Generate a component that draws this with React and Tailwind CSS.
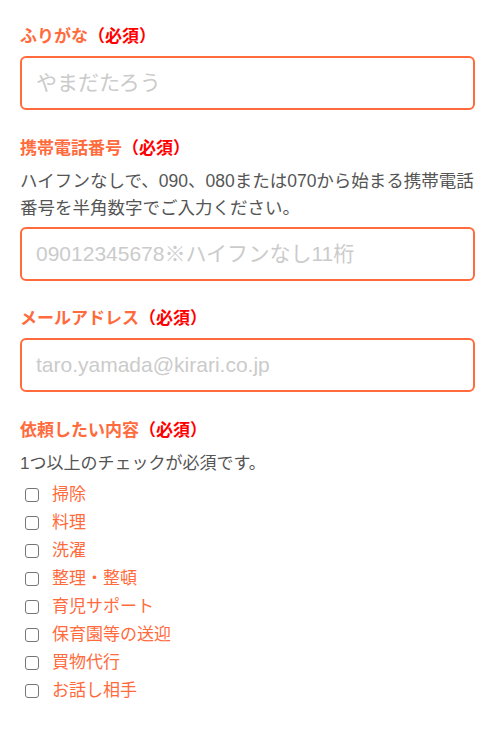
export default function App() {
  const items = ['掃除', '料理', '洗濯', '整理・整頓', '育児サポート', '保育園等の送迎', '買物代行', 'お話し相手'];
  const font = { fontFamily: '"Liberation Sans", "Noto Sans CJK JP", sans-serif' };

  const Label = ({ children }) => (
    <p className="mb-[6px] text-[17px] font-bold leading-[27px] text-[#ff6b3d]">
      {children}
      <span className="text-[#ff0000]">（必須）</span>
    </p>
  );

  const Field = ({ placeholder }) => (
    <input
      type="text"
      placeholder={placeholder}
      className="block h-[54px] w-full rounded-[6px] border-2 border-[#ff6b3d] px-[14px] text-[21px] outline-none placeholder:text-[#cbcbcb]"
    />
  );

  return (
    <div className="min-h-screen bg-white pl-5 pr-[18px] pt-[23px]" style={font}>
      <div className="mb-[25px]">
        <Label>ふりがな</Label>
        <Field placeholder="やまだたろう" />
      </div>

      <div className="mb-[24px]">
        <Label>携帯電話番号</Label>
        <p className="mb-[5px] text-[17.5px] leading-[27px] text-[#555]">
          ハイフンなしで、090、080または070から始まる携帯電話番号を半角数字でご入力ください。
        </p>
        <Field placeholder="09012345678※ハイフンなし11桁" />
      </div>

      <div className="mb-[25px]">
        <Label>メールアドレス</Label>
        <Field placeholder="taro.yamada@kirari.co.jp" />
      </div>

      <div>
        <Label>依頼したい内容</Label>
        <p className="mb-[4px] text-[17px] leading-[27px] text-[#555]">1つ以上のチェックが必須です。</p>
        <ul>
          {items.map((it) => (
            <li key={it} className="flex h-[28px] items-center">
              <input
                type="checkbox"
                className="ml-[5px] h-[14px] w-[14px] appearance-none rounded-[3px] border-[1.5px] border-[#767676] bg-white"
              />
              <span className="ml-[13px] text-[17px] text-[#ff6b3d]">{it}</span>
            </li>
          ))}
        </ul>
      </div>
    </div>
  );
}
